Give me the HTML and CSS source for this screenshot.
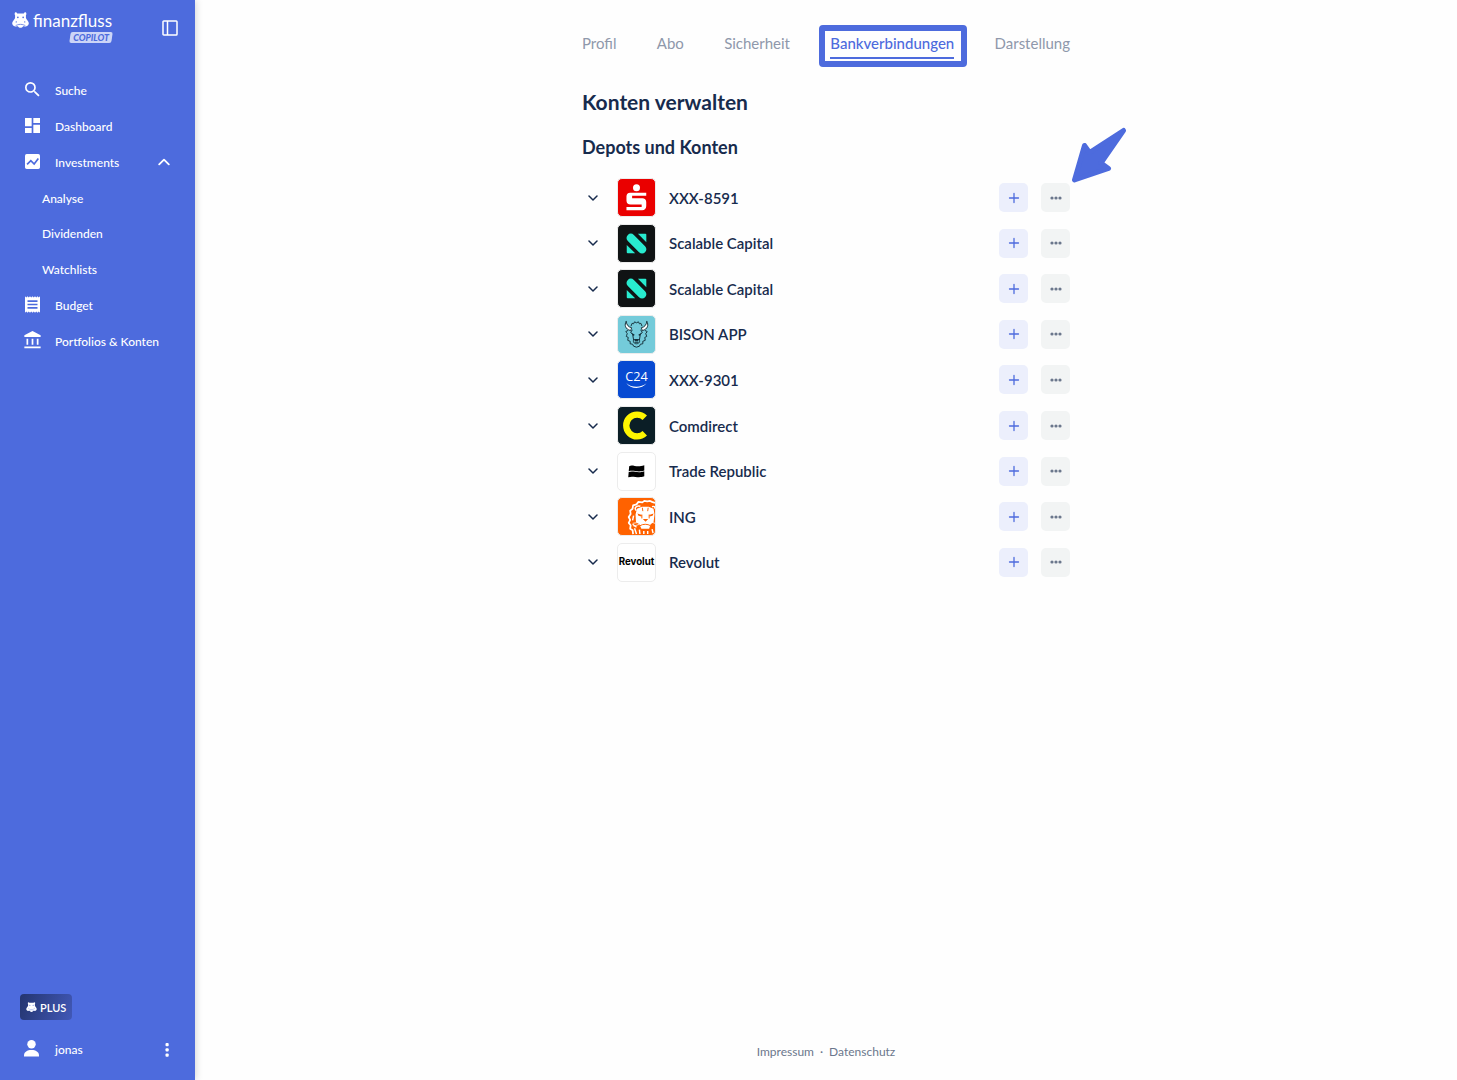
FILE: index.html
```html
<!DOCTYPE html>
<html lang="de">
<head>
  <meta charset="UTF-8">
  <meta name="viewport" content="width=device-width, initial-scale=1.0">
  <title>Finanzfluss Copilot - Bankverbindungen</title>
  <link rel="stylesheet" href="styles.css">
</head>
<body>

  <!-- Shared icons -->
  <svg class="sprite" aria-hidden="true">
    <symbol id="hippo" viewBox="0 0 16 15">
      <path fill="currentColor" d="M2.600 1.200C2.600.2 4.300-.2 4.900 1.300h6.200c.6-1.500 2.300-1.100 2.300-.1.300.700 0 1.400-.3 1.900v2.600c.3.900.9 1.500 1.500 2.200 2.200 2.400 1.300 5.200-1.600 5.600-1 .1-1.800 0-2.500-.1-.7 1-1.500 1.500-2.500 1.500s-1.800-.5-2.500-1.500c-.7.1-1.500.2-2.500.1-2.900-.4-3.800-3.200-1.600-5.600.6-.7 1.200-1.300 1.500-2.200V3.100c-.3-.5-.6-1.200-.3-1.900z"/>
      <g fill="#4d6bdd"><circle cx="5.500" cy="5" r=".8"/><circle cx="10.500" cy="5" r=".8"/><circle cx="4" cy="9.300" r=".6"/><circle cx="12" cy="9.300" r=".6"/></g>
      <path fill="none" stroke="#4d6bdd" stroke-width=".7" d="M3.500 12.600c1.500-.2 2-1 4.500-1s3 .8 4.500 1"/>
    </symbol>
    <symbol id="chevron" viewBox="0 0 10 10">
      <path fill="none" stroke="currentColor" stroke-width="1.500" stroke-linecap="round" stroke-linejoin="round" d="m1 3 4 4 4-4"/>
    </symbol>
    <symbol id="plus" viewBox="0 0 12 12">
      <path stroke="currentColor" stroke-width="1.300" stroke-linecap="round" d="M6 1.500v9M1.500 6h9"/>
    </symbol>
    <symbol id="dots" viewBox="0 0 12 12">
      <g fill="currentColor"><circle cx="2" cy="6" r="1.600"/><circle cx="6" cy="6" r="1.600"/><circle cx="10" cy="6" r="1.600"/></g>
    </symbol>
    <symbol id="scalable" viewBox="0 0 38 38">
      <g fill="#28ebcf">
        <path d="M10.100 10.200c1.800-1.800 4.300-1.800 6.200 0L27.800 21.700c1.800 1.800 1.800 4.300 0 6.200-1.800 1.800-4.300 1.800-6.200 0L10.100 16.400c-1.800-1.900-1.800-4.400 0-6.200z"/>
        <path d="M20.500 9h7.600c.6 0 1 .4 1 1v7.600z"/>
        <path d="M9 20.500 17.600 29H10c-.6 0-1-.4-1-1z"/>
      </g>
    </symbol>
  </svg>

  <div class="layout">
    <aside class="sidebar">
      <div class="sidebar-top">
        <a href="#" class="brand">
          <svg class="brand-icon" aria-hidden="true"><use href="#hippo"/></svg>
          <span class="brand-name">finanzfluss</span>
          <span class="brand-tag">COPILOT</span>
        </a>
        <button class="icon-btn" aria-label="Seitenleiste einklappen">
          <svg width="16" height="16" viewBox="0 0 16 16" fill="none" stroke="currentColor" stroke-width="1.500"><rect x="1" y="1" width="14" height="14" rx=".8"/><path d="M5.500 1v14"/></svg>
        </button>
      </div>

      <nav class="side-nav">
        <a href="#" class="nav-item">
          <svg class="nav-icon" viewBox="3 3 18 18"><path d="M15.500 14h-.79l-.28-.27A6.470 6.470 0 0 0 16 9.500 6.500 6.500 0 1 0 9.500 16c1.610 0 3.090-.59 4.230-1.570l.27.28v.79l5 4.990L20.490 19l-4.990-5zm-6 0C7.010 14 5 11.990 5 9.500S7.010 5 9.500 5 14 7.010 14 9.500 11.990 14 9.500 14z"/></svg>
          Suche
        </a>
        <a href="#" class="nav-item">
          <svg class="nav-icon" viewBox="3 3 18 18"><path d="M3 13h8V3H3v10zm0 8h8v-6H3v6zm10 0h8V11h-8v10zm0-18v6h8V3h-8z"/></svg>
          Dashboard
        </a>
        <button class="nav-item" aria-expanded="true">
          <svg class="nav-icon" viewBox="3 3 18 18"><path d="M19 3H5a2 2 0 0 0-2 2v14c0 1.100.9 2 2 2h14a2 2 0 0 0 2-2V5a2 2 0 0 0-2-2z"/><path fill="none" stroke="#4d6bdd" stroke-width="2" d="m5.500 15.500 4.500-4.500 4 4 5-6.500"/></svg>
          Investments
          <svg class="nav-caret"><use href="#chevron"/></svg>
        </button>
        <a href="#" class="nav-item nav-sub">Analyse</a>
        <a href="#" class="nav-item nav-sub">Dividenden</a>
        <a href="#" class="nav-item nav-sub">Watchlists</a>
        <a href="#" class="nav-item">
          <svg class="nav-icon" viewBox="3 2 18 20"><path d="M18 17H6v-2h12v2zm0-4H6v-2h12v2zm0-4H6V7h12v2zM3 22l1.500-1.500L6 22l1.500-1.500L9 22l1.500-1.500L12 22l1.500-1.500L15 22l1.500-1.500L18 22l1.500-1.500L21 22V2l-1.500 1.500L18 2l-1.500 1.500L15 2l-1.500 1.500L12 2l-1.500 1.500L9 2 7.500 3.500 6 2 4.500 3.500 3 2v20z"/></svg>
          Budget
        </a>
        <a href="#" class="nav-item">
          <svg class="nav-icon nav-icon-wide" viewBox="2 1 19 21"><path d="M6.500 10h-2v7h2v-7zm6 0h-2v7h2v-7zm8.500 9H2v2h19v-2zm-2.500-9h-2v7h2v-7zM11.500 1 2 6v2h19V6l-9.500-5z"/></svg>
          Portfolios &amp; Konten
        </a>
      </nav>

      <div class="sidebar-bottom">
        <a href="#" class="plus-badge"><svg width="11" height="10" aria-hidden="true"><use href="#hippo"/></svg>PLUS</a>
        <div class="user">
          <svg class="nav-icon" viewBox="0 0 16 18"><circle cx="8" cy="4.500" r="4.500"/><path d="M0 17.500v-1.200C0 12.500 3.500 10.500 8 10.500s8 2 8 5.800v1.200z"/></svg>
          <span>jonas</span>
          <button class="icon-btn" aria-label="Benutzermenü">
            <svg width="14" height="14" viewBox="0 0 14 14" fill="currentColor"><rect x="5.500" y="0" width="3.200" height="3.200" rx="1"/><rect x="5.500" y="5.300" width="3.200" height="3.200" rx="1"/><rect x="5.500" y="10.600" width="3.200" height="3.200" rx="1"/></svg>
          </button>
        </div>
      </div>
    </aside>

    <main class="main">
      <div class="content">
        <nav class="tabs">
          <a href="#">Profil</a>
          <a href="#">Abo</a>
          <a href="#">Sicherheit</a>
          <a href="#" class="active" aria-current="page">Bankverbindungen</a>
          <a href="#">Darstellung</a>
        </nav>

        <h1>Konten verwalten</h1>
        <h2>Depots und Konten</h2>

        <ul class="accounts">
          <li class="account">
            <button class="toggle" aria-label="Aufklappen"><svg><use href="#chevron"/></svg></button>
            <svg class="logo logo-sparkasse" viewBox="0 0 38 38"><g fill="#fff"><circle cx="19" cy="9" r="3.600"/><path d="M12.500 14H29v3.200H14.500v2.500H25c2.500 0 4 1.500 4 4v4c0 2.700-1.500 4.300-4.200 4.300H8.700V28.700h15.600v-2.500H13c-2.800 0-4.300-1.400-4.300-4v-4.300c0-2.500 1.300-3.900 3.800-3.900z"/></g></svg>
            <span class="account-name">XXX-8591</span>
            <button class="action add" aria-label="Konto hinzufügen"><svg><use href="#plus"/></svg></button>
            <button class="action more" aria-label="Mehr"><svg><use href="#dots"/></svg></button>
            <svg class="pointer" viewBox="0 0 56 56" aria-hidden="true"><path d="m3.500 53 10-34.500 5 7L52.500 3.500 30 36l7.500 5.500z"/></svg>
          </li>
          <li class="account">
            <button class="toggle" aria-label="Aufklappen"><svg><use href="#chevron"/></svg></button>
            <svg class="logo logo-scalable"><use href="#scalable"/></svg>
            <span class="account-name">Scalable Capital</span>
            <button class="action add" aria-label="Konto hinzufügen"><svg><use href="#plus"/></svg></button>
            <button class="action more" aria-label="Mehr"><svg><use href="#dots"/></svg></button>
          </li>
          <li class="account">
            <button class="toggle" aria-label="Aufklappen"><svg><use href="#chevron"/></svg></button>
            <svg class="logo logo-scalable"><use href="#scalable"/></svg>
            <span class="account-name">Scalable Capital</span>
            <button class="action add" aria-label="Konto hinzufügen"><svg><use href="#plus"/></svg></button>
            <button class="action more" aria-label="Mehr"><svg><use href="#dots"/></svg></button>
          </li>
          <li class="account">
            <button class="toggle" aria-label="Aufklappen"><svg><use href="#chevron"/></svg></button>
            <svg class="logo logo-bison" viewBox="0 0 38 38">
              <g fill="none" stroke="#16313b" stroke-width="1" stroke-linejoin="round" stroke-linecap="round">
                <path fill="#fff" d="M8.300 5.800c-2 3.200-1 7.800 4.700 9.200l1-3c-3.300-.5-5-2.800-5.700-6.200zM29.700 5.800c2 3.200 1 7.800-4.700 9.200l-1-3c3.300-.5 5-2.800 5.700-6.200z"/>
                <path d="m13.500 10 1-2.500 1.500.5 1-2 2 1 2-1 1 2 1.500-.5 1 2.500"/>
                <path stroke-dasharray="3 .7" d="m10 15-2 1 1.500 2L8.500 21l2 1-.5 3 2.500 1v2.500l2.500.5 1 2 3 1 3-1 1-2 2.500-.5V26l2.500-1-.5-3 2-1-1-3 1.500-2-2-1"/>
                <path d="M14.500 14.500 13 17l2 1.500 1 6M23.500 14.500 25 17l-2 1.500-1 6M16 24.500c-1 2 .5 4 3 4s4-2 3-4M17.500 27h3"/>
              </g>
              <path fill="#16313b" d="m13 17 4 2-.7 1.800zM25 17l-4 2 .7 1.800zM16.300 23.500h5.400l-1.200 2.500h-3z"/>
            </svg>
            <span class="account-name">BISON APP</span>
            <button class="action add" aria-label="Konto hinzufügen"><svg><use href="#plus"/></svg></button>
            <button class="action more" aria-label="Mehr"><svg><use href="#dots"/></svg></button>
          </li>
          <li class="account">
            <button class="toggle" aria-label="Aufklappen"><svg><use href="#chevron"/></svg></button>
            <svg class="logo logo-c24" viewBox="0 0 38 38"><text x="19" y="21" text-anchor="middle">C24</text><path fill="#fff" d="M8.500 22.500c5.500 5.200 15 5.200 20.800.4-4.800 6.400-16.300 6.400-20.800-.4z"/></svg>
            <span class="account-name">XXX-9301</span>
            <button class="action add" aria-label="Konto hinzufügen"><svg><use href="#plus"/></svg></button>
            <button class="action more" aria-label="Mehr"><svg><use href="#dots"/></svg></button>
          </li>
          <li class="account">
            <button class="toggle" aria-label="Aufklappen"><svg><use href="#chevron"/></svg></button>
            <svg class="logo logo-comdirect" viewBox="0 0 38 38"><path fill="none" stroke="#fff500" stroke-width="6.500" d="M27.500 11a11.200 11.200 0 1 0 0 16"/></svg>
            <span class="account-name">Comdirect</span>
            <button class="action add" aria-label="Konto hinzufügen"><svg><use href="#plus"/></svg></button>
            <button class="action more" aria-label="Mehr"><svg><use href="#dots"/></svg></button>
          </li>
          <li class="account">
            <button class="toggle" aria-label="Aufklappen"><svg><use href="#chevron"/></svg></button>
            <svg class="logo logo-white" viewBox="0 0 38 38"><path d="M11.500 13.500c4-2 7 2 15.500-.8v5.300c-7 2.500-11-1-16 .8zM11 19.500c5-2 8.500 1.800 16-.8V24c-7 2.500-11-1-16.500 1z"/></svg>
            <span class="account-name">Trade Republic</span>
            <button class="action add" aria-label="Konto hinzufügen"><svg><use href="#plus"/></svg></button>
            <button class="action more" aria-label="Mehr"><svg><use href="#dots"/></svg></button>
          </li>
          <li class="account">
            <button class="toggle" aria-label="Aufklappen"><svg><use href="#chevron"/></svg></button>
            <svg class="logo logo-ing" viewBox="0 0 38 38">
              <path fill="none" stroke="#fff" stroke-width="1.800" stroke-linejoin="round" d="m38 5-3-1-2-1-3 .5L27 3l-2 1.500-4-.5-2 2.500-3.500 1L15 11l-2.500 2 .5 3.500-2 3 1.500 3-1.500 3 2 2.500-.5 3.500 2.500 1.500.5 4"/>
              <path fill="none" stroke="#fff" stroke-width="1.500" d="M19 13c-3-2-.5-6 4-4.500M35 9c2-1 3 0 3 2M16 18l-1 5M17 31l2 6M22 32.500l.5 4.500M26.500 34v3M30.500 34v3M35 32l1 4M15 27l4 3"/>
              <path fill="#fff" d="m19.500 11 5-2h7l5 2 1 6-1 8-3 2-1.500 4.500h-8L22 27l-3.500-2-.5-8z"/>
              <path fill="none" stroke="#ff6200" stroke-width="1" d="m25 10 .5 3.500M31 10l-.5 3.500M24.500 17v4M32 17v4M22.500 28.500c3-2 8-2 11 0"/>
              <path fill="#ff6200" d="m20 16 4.500 1.500-.5 1.500-3-.8zM36.500 16 32 17.500l.5 1.500 3-.8zM25.500 21.500h5.500l-2.700 3z"/>
              <path fill="none" stroke="#fff" stroke-width=".8" d="m22 25-7 1M22 27l-6 2M35 25l3 1"/>
            </svg>
            <span class="account-name">ING</span>
            <button class="action add" aria-label="Konto hinzufügen"><svg><use href="#plus"/></svg></button>
            <button class="action more" aria-label="Mehr"><svg><use href="#dots"/></svg></button>
          </li>
          <li class="account">
            <button class="toggle" aria-label="Aufklappen"><svg><use href="#chevron"/></svg></button>
            <svg class="logo logo-white logo-revolut" viewBox="0 0 38 38"><text x="19" y="22" text-anchor="middle">Revolut</text></svg>
            <span class="account-name">Revolut</span>
            <button class="action add" aria-label="Konto hinzufügen"><svg><use href="#plus"/></svg></button>
            <button class="action more" aria-label="Mehr"><svg><use href="#dots"/></svg></button>
          </li>
        </ul>
      </div>

      <footer class="footer">
        <a href="#">Impressum</a>
        <span>·</span>
        <a href="#">Datenschutz</a>
      </footer>
    </main>
  </div>

</body>
</html>
```
FILE: styles.css
```css
* {
  box-sizing: border-box;
}

body {
  margin: 0;
  font-family: Lato, "Open Sans", sans-serif;
  font-size: 15px;
  color: #172b4d;
  background-color: #fefefe;
}

a {
  color: inherit;
  text-decoration: none;
}

button {
  padding: 0;
  border: none;
  background: none;
  color: inherit;
  font: inherit;
  cursor: pointer;
}

svg {
  flex-shrink: 0;
}

.sprite {
  display: none;
}

.layout {
  display: flex;
  min-height: 100vh;
}

/* Sidebar */
.sidebar {
  display: flex;
  flex-direction: column;
  flex-shrink: 0;
  width: 195px;
  color: #fff;
  background-color: #4d6bdd;
  box-shadow: 0 0 8px rgba(0, 0, 0, 0.2);
}

.sidebar-top {
  display: flex;
  justify-content: space-between;
  align-items: flex-start;
  height: 73px;
  padding: 12px 16px 0 12px;
}

.brand {
  display: grid;
  grid-template-columns: 17px auto;
  column-gap: 4px;
}

.brand-icon {
  width: 17px;
  height: 16px;
}

.brand-name {
  font-size: 17px;
  line-height: 18px;
}

.brand-tag {
  position: relative;
  z-index: 0;
  grid-column: 2;
  justify-self: end;
  margin-top: 2px;
  padding: 0 3px;
  color: #4d6bdd;
  font-size: 9px;
  font-style: italic;
  font-weight: 900;
  line-height: 11px;
}

.brand-tag::before {
  content: "";
  position: absolute;
  inset: 0;
  z-index: -1;
  border-radius: 2px;
  background-color: #ccd5f7;
  transform: skewX(-8deg);
}

.icon-btn {
  display: flex;
  padding: 1px;
}

.sidebar-top .icon-btn {
  margin-top: 7px;
}

.side-nav {
  display: grid;
  grid-auto-rows: 1fr;
  height: 286px;
}

.nav-item {
  display: flex;
  align-items: center;
  gap: 15px;
  padding: 0 25px;
  font-size: 12px;
  font-weight: 500;
  text-align: left;
}

.nav-sub {
  padding-left: 42px;
}

.nav-icon {
  width: 15px;
  height: 17px;
  margin-bottom: 2px;
  fill: currentColor;
}

.nav-icon-wide {
  width: 17px;
  height: 18px;
  margin-left: -1px;
  margin-right: -1px;
}

.nav-caret {
  width: 12px;
  height: 12px;
  margin-left: auto;
  transform: rotate(180deg);
}

.sidebar-bottom {
  margin-top: auto;
  padding: 0 20px 21px;
}

.plus-badge {
  display: inline-flex;
  align-items: center;
  gap: 3px;
  height: 26px;
  padding: 0 6px;
  border-radius: 4px;
  background: linear-gradient(110deg, #24356f, #4158b7);
  font-size: 11px;
  font-weight: 600;
}

.user {
  display: flex;
  align-items: center;
  gap: 16px;
  margin-top: 20px;
  padding-left: 4px;
  font-size: 12px;
  font-weight: 500;
}

.user .icon-btn {
  margin-left: auto;
}

/* Main */
.main {
  display: flex;
  flex: 1;
  flex-direction: column;
  align-items: center;
}

.content {
  width: 100%;
  max-width: 488px;
  padding-top: 30px;
}

.tabs {
  display: flex;
  justify-content: space-between;
  color: #8f98ab;
  line-height: 27px;
}

.tabs .active {
  position: relative;
  border-bottom: 2px solid #4d6bdd;
  color: #4d6bdd;
  font-weight: 500;
}

/* Frame around the current tab */
.tabs .active::after {
  content: "";
  position: absolute;
  inset: -5px -13px -10px -11px;
  border: 6px solid #4d6bdd;
  border-radius: 4px;
}

h1 {
  margin: 28px 0 0;
  font-size: 21px;
  font-weight: 700;
  line-height: 30px;
}

h2 {
  margin: 17px 0 0;
  font-size: 18px;
  font-weight: 700;
  line-height: 26px;
}

.accounts {
  display: grid;
  grid-auto-rows: 1fr;
  height: 410px;
  margin: 15px 0 0;
  padding: 0;
  list-style: none;
}

.account {
  position: relative;
  display: flex;
  align-items: center;
}

.toggle {
  display: flex;
  justify-content: center;
  width: 22px;
  margin-right: 13px;
}

.toggle svg {
  width: 10px;
  height: 10px;
}

.logo {
  width: 39px;
  height: 39px;
  margin-right: 13px;
  border: 1px solid #ececec;
  border-radius: 5px;
}

.logo-sparkasse {
  background-color: #ea0000;
}

.logo-scalable {
  background-color: #101314;
}

.logo-bison {
  background-color: #74cbda;
}

.logo-c24 {
  background-color: #074ad2;
}

.logo-c24 text {
  fill: #fff;
  font-family: "Open Sans", sans-serif;
  font-size: 13px;
  font-weight: 500;
}

.logo-comdirect {
  background-color: #0b1e26;
}

.logo-white {
  background-color: #fff;
}

.logo-ing {
  background-color: #ff6200;
}

.logo-revolut text {
  font-family: Inter, sans-serif;
  font-size: 10px;
  font-weight: 700;
}

.account-name {
  flex: 1;
  font-weight: 600;
}

.action {
  display: flex;
  align-items: center;
  justify-content: center;
  width: 29px;
  height: 29px;
  margin-left: 13px;
  border-radius: 5px;
}

.action svg {
  width: 12px;
  height: 12px;
}

.add {
  color: #4d6bdd;
  background-color: #eceffc;
}

.more {
  color: #6b778c;
  background-color: #f2f4f4;
}

.pointer {
  position: absolute;
  right: -57px;
  bottom: 38px;
  width: 56px;
  height: 56px;
  fill: #4d6bdd;
  stroke: #4d6bdd;
  stroke-width: 5;
  stroke-linejoin: round;
}

.footer {
  display: flex;
  gap: 6px;
  margin-top: auto;
  padding-bottom: 20px;
  color: #6b778c;
  font-size: 12px;
  line-height: 16px;
}
```
